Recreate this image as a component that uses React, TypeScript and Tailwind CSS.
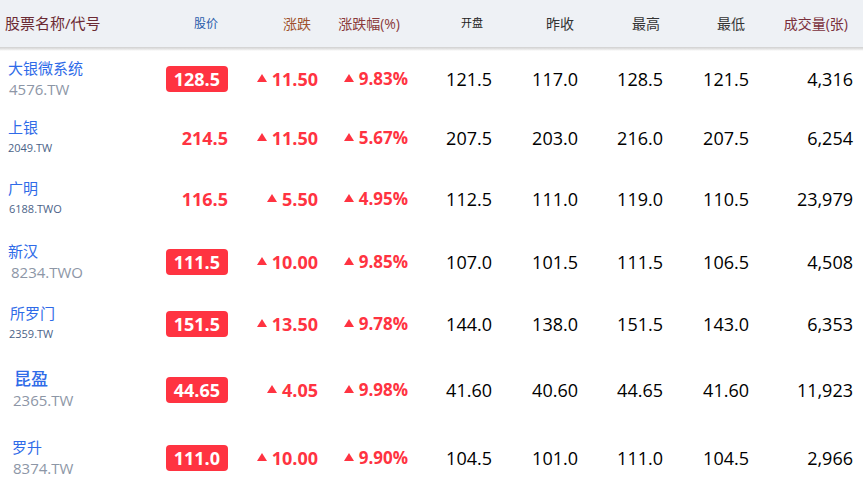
import React from "react";

type Row = {
  name: string;
  code: string;
  price: string;
  boxed: boolean;
  chg: string;
  pct: string;
  open: string;
  prev: string;
  high: string;
  low: string;
  vol: string;
  big: boolean;
  h: string;
  nameCls: string;
  codeCls: string;
};

const rows: Row[] = [
  { name: "大银微系统", code: "4576.TW", price: "128.5", boxed: true, chg: "11.50", pct: "9.83%", open: "121.5", prev: "117.0", high: "128.5", low: "121.5", vol: "4,316", big: true, h: "h-[56px]", nameCls: "pl-[8px] text-[15px]", codeCls: "pl-[9px]" },
  { name: "上银", code: "2049.TW", price: "214.5", boxed: false, chg: "11.50", pct: "5.67%", open: "207.5", prev: "203.0", high: "216.0", low: "207.5", vol: "6,254", big: false, h: "h-[62px]", nameCls: "pl-[8px] text-[15px]", codeCls: "pl-[8px]" },
  { name: "广明", code: "6188.TWO", price: "116.5", boxed: false, chg: "5.50", pct: "4.95%", open: "112.5", prev: "111.0", high: "119.0", low: "110.5", vol: "23,979", big: false, h: "h-[60px]", nameCls: "pl-[8px] text-[15px]", codeCls: "pl-[9px]" },
  { name: "新汉", code: "8234.TWO", price: "111.5", boxed: true, chg: "10.00", pct: "9.85%", open: "107.0", prev: "101.5", high: "111.5", low: "106.5", vol: "4,508", big: true, h: "h-[66px]", nameCls: "pl-[8px] text-[15px]", codeCls: "pl-[11px]" },
  { name: "所罗门", code: "2359.TW", price: "151.5", boxed: true, chg: "13.50", pct: "9.78%", open: "144.0", prev: "138.0", high: "151.5", low: "143.0", vol: "6,353", big: false, h: "h-[58px]", nameCls: "pl-[10px] text-[15px]", codeCls: "pl-[9px]" },
  { name: "昆盈", code: "2365.TW", price: "44.65", boxed: true, chg: "4.05", pct: "9.98%", open: "41.60", prev: "40.60", high: "44.65", low: "41.60", vol: "11,923", big: true, h: "h-[74px]", nameCls: "pl-[14px] text-[17px] font-medium", codeCls: "pl-[13px]" },
  { name: "罗升", code: "8374.TW", price: "111.0", boxed: true, chg: "10.00", pct: "9.90%", open: "104.5", prev: "101.0", high: "111.0", low: "104.5", vol: "2,966", big: true, h: "h-[62px]", nameCls: "pl-[12px] text-[15px]", codeCls: "pl-[13px]" },
];

const font = { fontFamily: '"Open Sans", "Noto Sans", "Noto Sans CJK SC", sans-serif' };

function Tri() {
  return (
    <svg width="10" height="8" viewBox="0 0 10 8" className="mr-[5px] mb-[2px]">
      <polygon points="5,0 10,8 0,8" fill="#ff3341" />
    </svg>
  );
}

export default function App() {
  return (
    <div className="w-[863px] h-[481px] overflow-hidden bg-white" style={font}>
      <div className="flex items-center h-[47px] bg-[#eef1f5]">
        <div className="w-[150px] pl-[5px] text-[15px] text-[#6b2a33]">股票名称/代号</div>
        <div className="w-[78px] text-right pr-[10px] text-[12px] text-[#2a5caa]">股价</div>
        <div className="w-[90px] text-right pr-[7px] text-[14px] text-[#a0522d]">涨跌</div>
        <div className="w-[90px] text-right pr-[8px] text-[14px] text-[#8b3a3a]">涨跌幅(%)</div>
        <div className="w-[84px] text-right pr-[9px] text-[11px] text-[#222]">开盘</div>
        <div className="w-[86px] text-right pr-[4px] text-[14px] text-[#333]">昨收</div>
        <div className="w-[85px] text-right pr-[3px] text-[14px] text-[#333]">最高</div>
        <div className="w-[86px] text-right pr-[4px] text-[14px] text-[#333]">最低</div>
        <div className="w-[104px] text-right pr-[5px] text-[14px] text-[#7a2f3a]">成交量(张)</div>
      </div>
      <div className="h-[4px] bg-gradient-to-b from-[#d0d0d0] via-[#e4e4e4] to-white" />
      {rows.map((r) => (
        <div key={r.code} className={`flex items-center ${r.h}`}>
          <div className="w-[150px] flex flex-col">
            <div className={`${r.nameCls} leading-[20px] text-[#2f6be8]`}>{r.name}</div>
            {r.big ? (
              <div className={`${r.codeCls} text-[15px] leading-[22px] text-[#8d96a6]`}>{r.code}</div>
            ) : (
              <div className={`${r.codeCls} text-[11px] leading-[22px] text-[#4b6388]`}>{r.code}</div>
            )}
          </div>
          <div className="w-[78px] flex justify-end">
            {r.boxed ? (
              <div className="h-[26px] px-[8px] rounded-[4px] bg-[#ff3341] text-white font-bold text-[18px] leading-[26px]">{r.price}</div>
            ) : (
              <div className="text-[#ff3341] font-bold text-[18px] leading-[26px]">{r.price}</div>
            )}
          </div>
          <div className="w-[90px] flex justify-end items-center text-[#ff3341] font-bold text-[18px]">
            <Tri />
            {r.chg}
          </div>
          <div className="w-[90px] flex justify-end items-center text-[#ff3341] font-bold text-[17px]">
            <Tri />
            {r.pct}
          </div>
          <div className="w-[84px] text-right text-[18px] text-black">{r.open}</div>
          <div className="w-[86px] text-right text-[18px] text-black">{r.prev}</div>
          <div className="w-[85px] text-right text-[18px] text-black">{r.high}</div>
          <div className="w-[86px] text-right text-[18px] text-black">{r.low}</div>
          <div className="w-[104px] text-right text-[18px] text-black">{r.vol}</div>
        </div>
      ))}
    </div>
  );
}
